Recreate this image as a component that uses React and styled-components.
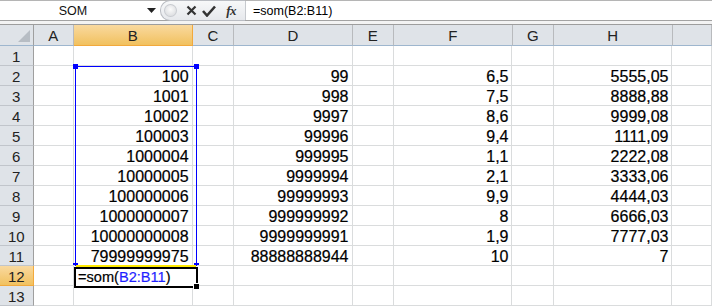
import styled, { createGlobalStyle, css } from 'styled-components';

const GlobalStyle = createGlobalStyle`
	html, body {
		margin: 0;
		padding: 0;
		background: #fff;
		overflow: hidden;
	}
	body {
		font-family: "Liberation Sans", Arial, sans-serif;
	}
`;

const COLUMNS = [
	{ name: 'A', width: 41 },
	{ name: 'B', width: 120 },
	{ name: 'C', width: 42 },
	{ name: 'D', width: 120 },
	{ name: 'E', width: 42 },
	{ name: 'F', width: 120 },
	{ name: 'G', width: 42 },
	{ name: 'H', width: 120 },
	{ name: '', width: 40 },
];

const DATA = {
	2: { B: '100', D: '99', F: '6,5', H: '5555,05' },
	3: { B: '1001', D: '998', F: '7,5', H: '8888,88' },
	4: { B: '10002', D: '9997', F: '8,6', H: '9999,08' },
	5: { B: '100003', D: '99996', F: '9,4', H: '1111,09' },
	6: { B: '1000004', D: '999995', F: '1,1', H: '2222,08' },
	7: { B: '10000005', D: '9999994', F: '2,1', H: '3333,06' },
	8: { B: '100000006', D: '99999993', F: '9,9', H: '4444,03' },
	9: { B: '1000000007', D: '999999992', F: '8', H: '6666,03' },
	10: { B: '10000000008', D: '9999999991', F: '1,9', H: '7777,03' },
	11: { B: '79999999975', D: '88888888944', F: '10', H: '7' },
};

const Window = styled.div`
	width: 712px;
	height: 307px;
	overflow: hidden;
	background: #fff;
`;

const FormulaBar = styled.div`
	display: flex;
	height: 21px;
	border-top: 1px solid #b5b5b5;
	border-bottom: 1px solid #a3a3a3;
	box-sizing: border-box;
	background: #fff;
`;

const NameBox = styled.div`
	position: relative;
	width: 160px;
	display: flex;
	align-items: center;
	justify-content: center;
	font-size: 12.5px;
	color: #111;
	padding-right: 14px;
	box-sizing: border-box;
`;

const DropArrow = styled.svg`
	position: absolute;
	right: 4px;
	top: 7px;
`;

const ButtonGroup = styled.div`
	display: flex;
	align-items: center;
	width: 85px;
	margin-top: -1px;
	height: 21px;
	box-sizing: border-box;
	border: 1px solid #b9bcc2;
	border-right: none;
	border-radius: 10px 0 0 10px;
	background: linear-gradient(#f7f8f9, #e6e8ec);
	padding-left: 3px;
`;

const Dot = styled.div`
	width: 13px;
	height: 13px;
	border-radius: 50%;
	background: radial-gradient(circle at 50% 40%, #fbfbfb, #d4d6da);
	border: 1px solid #c8cbd0;
	box-sizing: border-box;
	margin-right: 5px;
`;

const IconSlot = styled.div`
	width: ${p => p.$w}px;
	height: 19px;
	display: flex;
	align-items: center;
	justify-content: center;
`;

const Fx = styled.span`
	font-family: "Liberation Serif", "Times New Roman", serif;
	font-style: italic;
	font-weight: bold;
	font-size: 13px;
	color: #333;
	letter-spacing: -0.5px;
`;

const FormulaInput = styled.div`
	flex: 1;
	border-left: 1px solid #c6c9ce;
	display: flex;
	align-items: center;
	padding-left: 7px;
	font-size: 12.5px;
	color: #000;
`;

const Band = styled.div`
	height: 3px;
	background: #f3f3f3;
	border-bottom: 1px solid #9d9d9d;
`;

const Sheet = styled.div`
	position: relative;
`;

const Row = styled.div`
	display: flex;
	height: ${p => (p.$header ? 21 : 20)}px;
`;

const headerLook = css`
	background: #dfe3e8;
	border-right: 1px solid #9eb6ce;
	border-bottom: 1px solid #9eb6ce;
	color: #222;
	font-size: 15px;
`;

const activeHeader = css`
	background: linear-gradient(#f9d99f, #f1c15f);
	border-right-color: #f2a93c;
	border-bottom-color: #f2a93c;
`;

const Corner = styled.div`
	${headerLook};
	width: 34px;
	box-sizing: border-box;
	position: relative;
	border-right-color: #9f9f9f;
	&::after {
		content: '';
		position: absolute;
		right: 3px;
		bottom: 3px;
		border-left: 12px solid transparent;
		border-bottom: 12px solid #b7bdc4;
	}
`;

const ColHeader = styled.div`
	${headerLook};
	width: ${p => p.$w}px;
	box-sizing: border-box;
	display: flex;
	align-items: center;
	justify-content: center;
	border-right-color: #b8babd;
	${p => p.$active && activeHeader};
`;

const RowHeader = styled.div`
	${headerLook};
	width: 34px;
	box-sizing: border-box;
	display: flex;
	align-items: center;
	justify-content: center;
	border-bottom-color: #c1c5cb;
	border-right-color: #9f9f9f;
	padding-top: 1px;
	${p => p.$active && activeHeader};
`;

const Cell = styled.div`
	width: ${p => p.$w}px;
	box-sizing: border-box;
	border-right: 1px solid #dadcdd;
	border-bottom: 1px solid #dadcdd;
	display: flex;
	align-items: flex-end;
	justify-content: flex-end;
	padding-right: 3px;
	font-size: 16px;
	line-height: 17px;
	color: #000;
	white-space: nowrap;
	-webkit-text-stroke: 0.2px #000;
`;

const Selection = styled.div`
	position: absolute;
	left: 75px;
	top: 41px;
	width: 122px;
	height: 200px;
	box-sizing: border-box;
	border: 1px solid #0000ff;
	pointer-events: none;
`;

const Handle = styled.div`
	position: absolute;
	width: 5px;
	height: ${p => p.$h || 5}px;
	background: #0000ff;
	${p => (p.$right ? 'right: -3px;' : 'left: -3px;')}
	${p => (p.$bottom ? 'bottom: 0;' : 'top: -3px;')}
`;

const YellowEdge = styled.div`
	position: absolute;
	left: 76px;
	top: 240px;
	width: 120px;
	height: 2px;
	background: #ffea00;
`;

const ActiveCell = styled.div`
	position: absolute;
	left: 74px;
	top: 242px;
	width: 124px;
	height: 21px;
	box-sizing: border-box;
	border: 2px solid #000;
	background: #fff;
	display: flex;
	align-items: flex-end;
	padding-left: 2px;
	font-size: 14.6px;
	line-height: 18px;
	white-space: nowrap;
	-webkit-text-stroke: 0.2px currentColor;
	&::after {
		content: '';
		position: absolute;
		right: -3px;
		bottom: -3px;
		width: 5px;
		height: 5px;
		background: #000;
		border: 1px solid #fff;
		border-right: none;
		border-bottom: none;
	}
`;

const Ref = styled.span`
	color: #1f1fff;
`;

const App = () => {
	const rows = Array.from({ length: 13 }, (_, i) => i + 1);
	return (
		<Window>
			<GlobalStyle />
			<FormulaBar>
				<NameBox>
					SOM
					<DropArrow width="9" height="5" viewBox="0 0 9 5">
						<path d="M0 0 H9 L4.5 5 Z" fill="#222" />
					</DropArrow>
				</NameBox>
				<ButtonGroup>
					<Dot />
					<IconSlot $w={20}>
						<svg width="11" height="11" viewBox="0 0 11 11">
							<path d="M1.5 1.5 L9.5 9.5 M9.5 1.5 L1.5 9.5" stroke="#333" strokeWidth="2.2" />
						</svg>
					</IconSlot>
					<IconSlot $w={16}>
						<svg width="14" height="12" viewBox="0 0 14 12">
							<path d="M1 6 L5 10.5 L13 1.5" stroke="#333" strokeWidth="2.6" fill="none" />
						</svg>
					</IconSlot>
					<IconSlot $w={28}>
						<Fx>fx</Fx>
					</IconSlot>
				</ButtonGroup>
				<FormulaInput>=som(B2:B11)</FormulaInput>
			</FormulaBar>
			<Band />
			<Sheet>
				<Row $header>
					<Corner />
					{COLUMNS.map(c => (
						<ColHeader key={c.name || 'x'} $w={c.width} $active={c.name === 'B'}>
							{c.name}
						</ColHeader>
					))}
				</Row>
				{rows.map(r => (
					<Row key={r}>
						<RowHeader $active={r === 12}>{r}</RowHeader>
						{COLUMNS.map(c => (
							<Cell key={c.name || 'x'} $w={c.width}>
								{DATA[r] && DATA[r][c.name]}
							</Cell>
						))}
					</Row>
				))}
				<Selection>
					<Handle />
					<Handle $right />
					<Handle $bottom $h={2} />
					<Handle $bottom $right $h={2} />
				</Selection>
				<YellowEdge />
				<ActiveCell>
					=som(<Ref>B2:B11</Ref>)
				</ActiveCell>
			</Sheet>
		</Window>
	);
};

export default App;
